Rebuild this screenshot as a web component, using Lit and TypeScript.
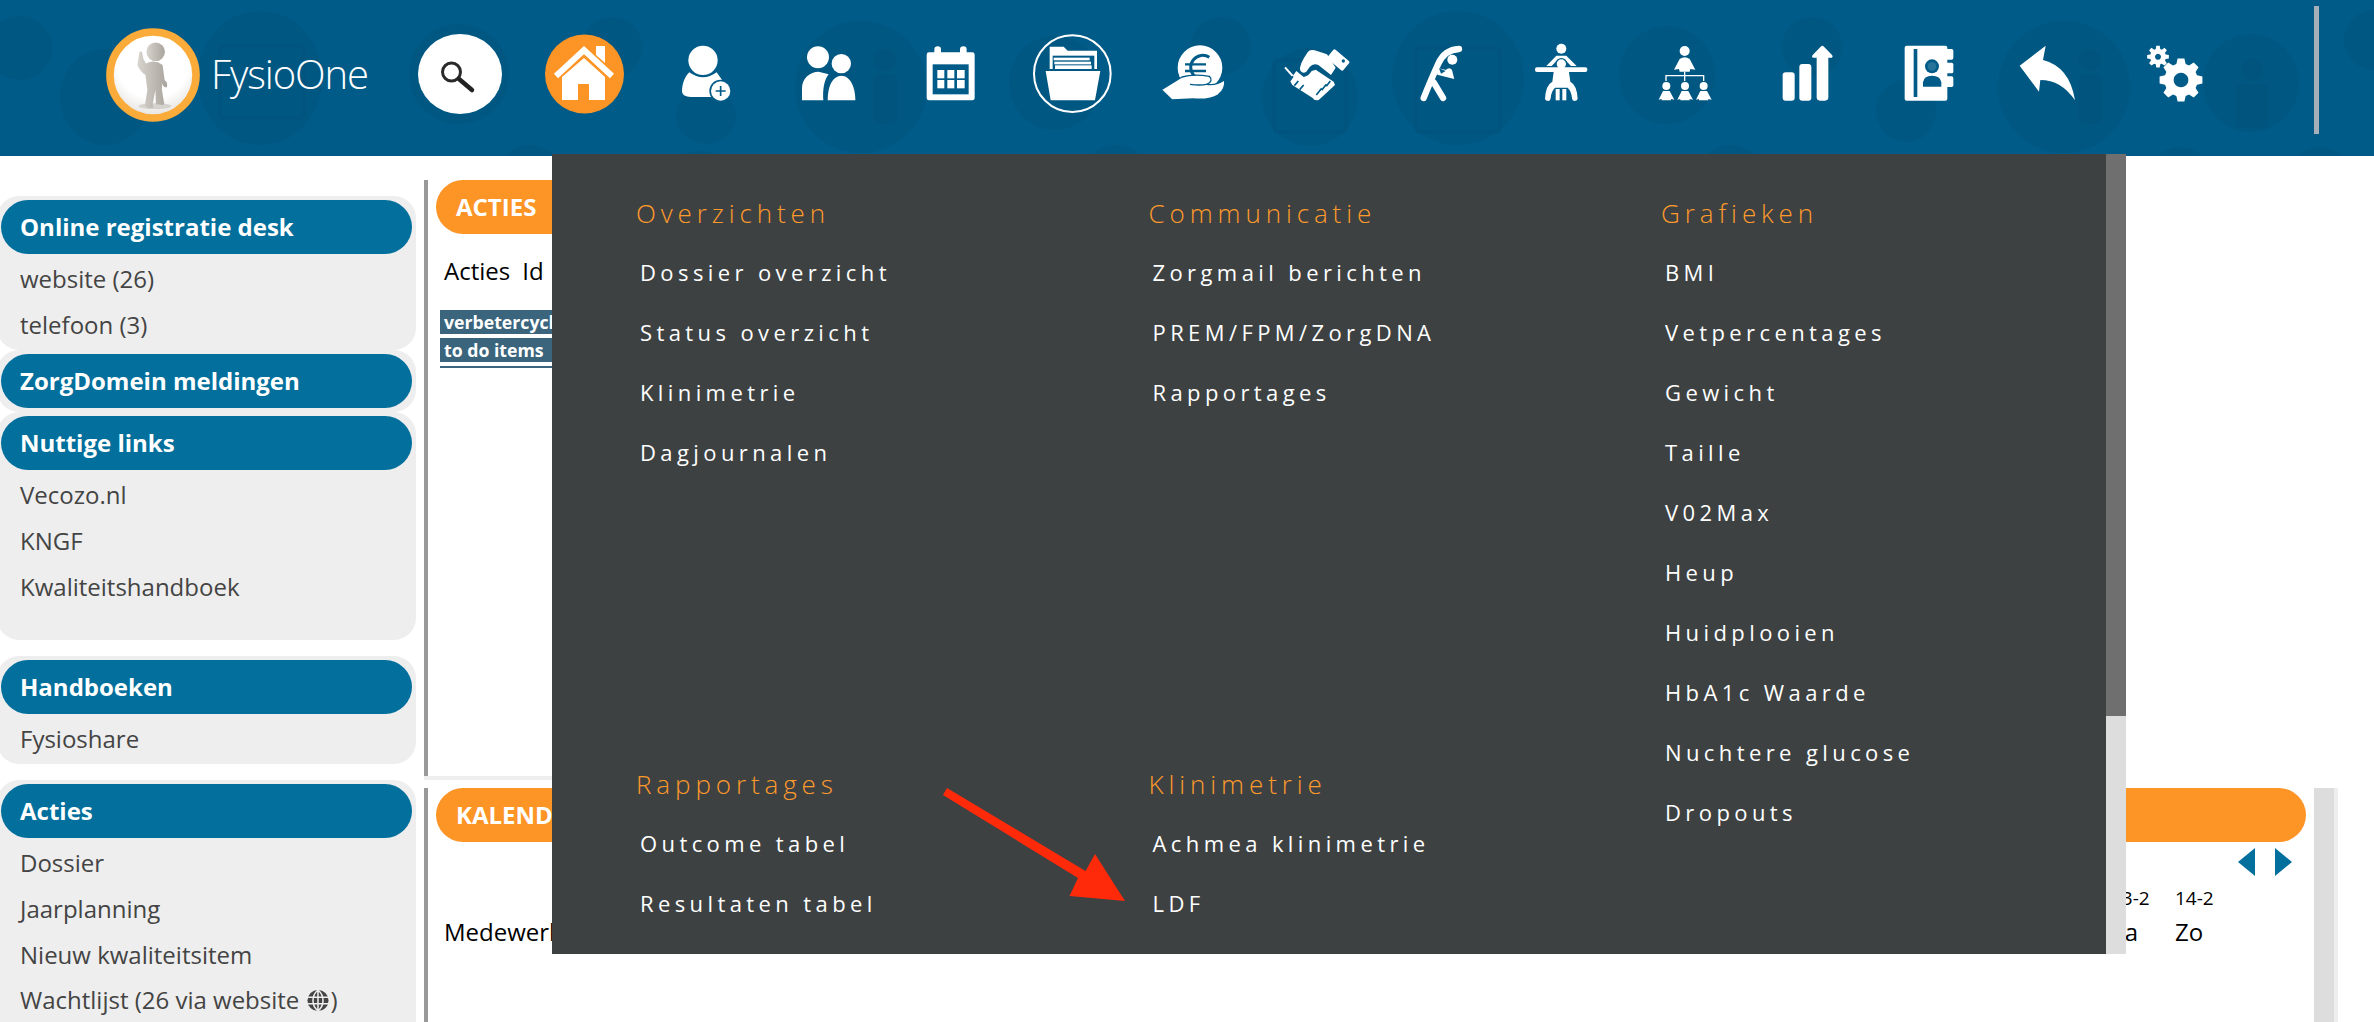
import { LitElement, html, svg, css } from "lit";
import { customElement } from "lit/decorators.js";

const BG = "#005b88";

function gear(cx: number, cy: number, rOut: number, rIn: number, teeth: number): string {
  const pts: string[] = [];
  const step = (Math.PI * 2) / teeth;
  for (let i = 0; i < teeth; i++) {
    const a = i * step - Math.PI / 2;
    const seq: [number, number][] = [
      [rIn, a - step * 0.36],
      [rOut, a - step * 0.2],
      [rOut, a + step * 0.2],
      [rIn, a + step * 0.36],
    ];
    for (const [r, t] of seq) pts.push(`${(cx + r * Math.cos(t)).toFixed(1)} ${(cy + r * Math.sin(t)).toFixed(1)}`);
  }
  return "M" + pts.join("L") + "Z";
}

interface NavIcon { x: number; w: number; icon: unknown; }

const navIcons: NavIcon[] = [
  { x: 418, w: 84, icon: html`<svg viewBox="418 25 84 100" width="84" height="100">
    <ellipse cx="460" cy="74" rx="42" ry="40" fill="#fff"/>
    <circle cx="451.5" cy="72" r="9" fill="none" stroke="#2a2a2a" stroke-width="3"/>
    <path d="M459 79 L472 90" stroke="#222" stroke-width="4.5" stroke-linecap="round"/>
  </svg>` },
  { x: 545, w: 79, icon: html`<svg viewBox="545 25 79 100" width="79" height="100">
    <circle cx="584.5" cy="74" r="39.5" fill="#fd9426"/>
    <path d="M596 46h9v17l-9-8z" fill="#fff"/>
    <path d="M556 76 L584 50 L612 76" fill="none" stroke="#fff" stroke-width="6"/>
    <path d="M562 77 L584 58 L605 77 V100 H589 V84 H578 V100 H562Z" fill="#fff"/>
  </svg>` },
  { x: 680, w: 53.33, icon: html`<svg viewBox="30 0 160 300" width="53.33" height="100">
    <circle cx="99" cy="106" r="44" fill="#fff"/>
    <path d="M58 142 Q99 172 140 142 L160 170 L160 216 L62 216 Q38 214 36 200 C36 178 44 154 58 142Z" fill="#fff"/>
    <circle cx="152" cy="198" r="34" fill="${BG}"/>
    <circle cx="152" cy="198" r="29" fill="#fff"/>
    <path d="M152 183V213M137 198H167" stroke="${BG}" stroke-width="5"/>
  </svg>` },
  { x: 800, w: 57.33, icon: html`<svg viewBox="390 0 172 300" width="57.33" height="100" fill="#fff">
    <circle cx="444" cy="97" r="33"/>
    <path d="M396 226 V190 C396 160 420 140 446 140 L476 148 C462 165 458 195 460 226Z"/>
    <circle cx="514" cy="116" r="29"/>
    <path d="M473 226 C473 180 490 152 514 152 C540 152 556 185 556 226Z"/>
  </svg>` },
  { x: 925, w: 51.67, icon: html`<svg viewBox="765 0 155 300" width="51.67" height="100">
    <rect x="770" y="82" width="144" height="144" rx="7" fill="#fff"/>
    <rect x="793" y="64" width="20" height="30" rx="10" fill="#fff"/>
    <rect x="870" y="64" width="20" height="30" rx="10" fill="#fff"/>
    <rect x="788" y="118" width="108" height="90" fill="${BG}"/>
    <g fill="#fff">
      <rect x="802" y="135" width="21" height="25"/><rect x="832" y="135" width="21" height="25"/><rect x="861" y="135" width="23" height="25"/>
      <rect x="802" y="165" width="21" height="25"/><rect x="832" y="165" width="21" height="25"/><rect x="861" y="165" width="23" height="25"/>
    </g>
  </svg>` },
  { x: 1031.67, w: 81.67, icon: html`<svg viewBox="1085 0 245 300" width="81.67" height="100">
    <circle cx="1206" cy="146" r="115" fill="none" stroke="#fff" stroke-width="6"/>
    <path d="M1138 132 V65 H1180 L1192 77 H1280 V132Z" fill="#fff"/>
    <rect x="1147" y="92" width="125" height="44" fill="${BG}"/>
    <g fill="#fff">
      <rect x="1150" y="98" width="108" height="8"/>
      <rect x="1152" y="110" width="110" height="8"/>
      <rect x="1154" y="121" width="110" height="11"/>
    </g>
    <path d="M1126 138 H1290 L1274 226 H1141Z" fill="#fff"/>
  </svg>` },
  { x: 1160, w: 66.67, icon: html`<svg viewBox="30 0 200 300" width="66.67" height="100">
    <circle cx="150" cy="128" r="67" fill="#fff"/>
    <path d="M178 97 A36 36 0 1 0 178 157" fill="none" stroke="${BG}" stroke-width="9"/>
    <path d="M105 118H168M105 138H168" stroke="${BG}" stroke-width="7"/>
    <path d="M34 194 L96 156 Q130 146 178 154 Q192 168 170 178 Q200 182 224 164 Q228 192 204 210 Q180 226 130 222 L66 225Z" fill="#fff" stroke="${BG}" stroke-width="4"/>
    <path d="M120 178 Q150 182 170 178" fill="none" stroke="${BG}" stroke-width="4"/>
  </svg>` },
  { x: 1283.33, w: 68.33, icon: html`<svg viewBox="400 0 205 300" width="68.33" height="100">
    <rect x="-31" y="-18" width="62" height="36" rx="5" transform="translate(566 105) rotate(40)" fill="#fff"/>
    <circle cx="581" cy="108" r="5" fill="${BG}"/>
    <path d="M452 137 Q446 122 474 82 Q480 72 495 76 L532 88 L558 128 L544 150 L506 120 Q490 114 480 126 L470 140 Q460 148 452 137Z" fill="#fff"/>
    <path d="M498 134 L552 170 L556 180 L508 224 Q496 230 488 218 L428 180 L420 166 L440 138 L462 156 Q476 154 486 138Z" fill="#fff"/>
    <path d="M406 127 L440 165" stroke="#fff" stroke-width="6"/>
    <path d="M500 210 L516 190M516 196 L530 178M530 184 L542 168M430 154 L420 168M446 168 L434 182M462 180 L450 194" stroke="${BG}" stroke-width="5"/>
  </svg>` },
  { x: 1418.33, w: 46.67, icon: html`<svg viewBox="805 0 140 300" width="46.67" height="100">
    <circle cx="908" cy="104" r="15" fill="#fff"/>
    <g fill="none" stroke="#fff" stroke-linecap="round">
      <path d="M928 72 Q885 74 866 116 Q846 160 822 219" stroke-width="19"/>
      <path d="M852 172 L880 219" stroke-width="19"/>
      <path d="M868 140 L900 148 L898 140" stroke-width="20"/>
    </g>
    <path d="M868 130 L888 138 L874 146Z" fill="${BG}"/>
  </svg>` },
  { x: 1533.33, w: 56.67, icon: html`<svg viewBox="1150 0 170 300" width="56.67" height="100" fill="#fff">
    <circle cx="1235" cy="71" r="15"/>
    <path d="M1190 123 L1220 92 H1250 L1281 123 H1264 L1246 104 H1224 L1206 123Z"/>
    <circle cx="1235" cy="117" r="18" fill="${BG}"/>
    <circle cx="1235" cy="117" r="14"/>
    <rect x="1156" y="127" width="157" height="14" rx="6"/>
    <path d="M1212 141 H1258 L1262 170 Q1282 180 1284 222 Q1282 228 1274 228 Q1268 228 1267 220 Q1266 200 1254 188 H1216 Q1204 200 1203 220 Q1202 228 1196 228 Q1188 228 1186 222 Q1188 180 1208 170Z"/>
    <rect x="1218" y="192" width="12" height="34"/>
    <rect x="1238" y="192" width="12" height="34"/>
  </svg>` },
  { x: 1656.67, w: 56.67, icon: html`<svg viewBox="20 0 170 300" width="56.67" height="100" fill="#fff">
    <circle cx="103" cy="78" r="15"/>
    <path d="M71 134 L88 102 Q103 92 118 102 L135 134 L120 132 L118 140 H88 L86 132Z"/>
    <path d="M47 168 V152 H160 V168 M103 140 V168" fill="none" stroke="#fff" stroke-width="4"/>
    <circle cx="48" cy="183" r="12"/><circle cx="104" cy="183" r="12"/><circle cx="160" cy="183" r="12"/>
    <path d="M25 224 L38 198 H58 L72 224 L62 222 V226 H34 V222Z"/>
    <path d="M81 224 L94 198 H114 L128 224 L118 222 V226 H90 V222Z"/>
    <path d="M137 224 L150 198 H170 L184 224 L174 222 V226 H146 V222Z"/>
  </svg>` },
  { x: 1780, w: 55, icon: html`<svg viewBox="390 0 165 300" width="55" height="100" fill="#fff">
    <rect x="398" y="142" width="36" height="85" rx="9"/>
    <rect x="448" y="117" width="36" height="110" rx="9"/>
    <path d="M500 98 H488 Q484 94 488 90 L512 65 Q517 60 522 65 L546 90 Q550 94 546 98 H535 V217 Q535 227 525 227 H510 Q500 227 500 217Z"/>
  </svg>` },
  { x: 1903.33, w: 51.67, icon: html`<svg viewBox="760 0 155 300" width="51.67" height="100">
    <rect x="765" y="62" width="128" height="165" rx="6" fill="#fff"/>
    <g fill="#fff">
      <rect x="885" y="72" width="26" height="32" rx="5"/>
      <rect x="885" y="113" width="26" height="32" rx="5"/>
      <rect x="885" y="154" width="26" height="32" rx="5"/>
    </g>
    <rect x="792" y="72" width="11" height="144" fill="${BG}"/>
    <circle cx="847" cy="124" r="21" fill="${BG}"/>
    <circle cx="847" cy="124" r="13" fill="#fff" opacity=".15"/>
    <path d="M820 185 V172 Q822 152 847 152 Q873 152 875 172 V185Z" fill="${BG}"/>
  </svg>` },
  { x: 2018.33, w: 58.33, icon: html`<svg viewBox="1105 0 175 300" width="58.33" height="100">
    <path d="M1110 122 L1188 62 L1180 105 Q1260 125 1276 226 Q1235 165 1172 165 L1168 200Z" fill="#fff"/>
  </svg>` },
  { x: 2146.67, w: 58.33, icon: html`<svg viewBox="50 0 175 300" width="58.33" height="100">
    <path fill-rule="evenodd" fill="#fff" d="${gear(86, 95, 33, 24, 8)} M86 86 a9 9 0 1 0 .01 0Z"/>
    <path fill-rule="evenodd" fill="#fff" d="${gear(155, 165, 65, 50, 8)} M155 143 a22 22 0 1 0 .01 0Z"/>
  </svg>` },
];

const NAV_START = 380;

const watermarks: [number, number, number, number][] = [
  [20, 48, 32, 32], [105, 97, 45, 48], [260, 78, 62, 67], [459, 74, 50, 50], [612, 47, 30, 30], [706, 116, 30, 28],
  [530, 175, 32, 30], [861, 87, 66, 66], [1055, 83, 46, 47], [1221, 46, 30, 29], [1310, 97, 48, 49], [1458, 78, 66, 67],
  [1116, 175, 32, 30], [1667, 75, 48, 49], [1812, 47, 30, 30], [1906, 111, 30, 31], [2064, 87, 66, 66], [2251, 83, 48, 49],
  [1731, 175, 32, 30], [2180, 175, 30, 28], [2320, 175, 30, 28], [2374, 40, 30, 30], [700, 175, 30, 24],
];

interface Section { title: string; items: string[]; cls: string; }

const menu: Section[] = [
  { title: "Overzichten", items: ["Dossier overzicht", "Status overzicht", "Klinimetrie", "Dagjournalen"], cls: "" },
  { title: "Communicatie", items: ["Zorgmail berichten", "PREM/FPM/ZorgDNA", "Rapportages"], cls: "" },
  { title: "Grafieken", items: ["BMI", "Vetpercentages", "Gewicht", "Taille", "V02Max", "Heup", "Huidplooien", "HbA1c Waarde", "Nuchtere glucose", "Dropouts"], cls: "tall" },
  { title: "Rapportages", items: ["Outcome tabel", "Resultaten tabel", "Indicatoren"], cls: "" },
  { title: "Klinimetrie", items: ["Achmea klinimetrie", "LDF"], cls: "" },
];

@customElement("app-root")
export class AppRoot extends LitElement {
  static styles = css`
    :host { display: block; position: relative; width: 2374px; height: 1022px; overflow: hidden; background: #fff; font-family: "Open Sans", "Noto Sans", sans-serif; }
    .header { position: relative; height: 156px; background: #005b88; display: flex; align-items: flex-start; overflow: hidden; }
    .wm { position: absolute; inset: 0; width: 100%; height: 100%; }
    .brand { position: relative; display: flex; align-items: flex-start; width: 274px; margin-left: 106px; margin-top: 28px; flex: none; }
    .brand-name { color: #fff; font-family: "Open Sans", sans-serif; font-weight: 300; font-size: 40px; line-height: 54px; letter-spacing: -1.1px; margin-left: 11px; margin-top: 19px; }
    .nav { position: relative; display: flex; margin-top: 25px; flex: none; }
    .nav svg { display: block; flex: none; }
    .divider { position: relative; width: 5px; height: 128px; margin-top: 6px; margin-left: 109px; background: #a4afb7; flex: none; }
    .body { display: flex; align-items: flex-start; }
    .sidebar { width: 419px; margin-left: -3px; padding-top: 40px; display: flex; flex-direction: column; flex: none; }
    .card { background: #eee; border-radius: 22px; padding: 4px; box-sizing: border-box; }
    .card.g16 { margin-bottom: 16px; }
    .card.h228 { height: 228px; }
    .card.h108 { height: 108px; }
    .card.first { height: 154px; }
    .card.last { min-height: 300px; }
    .pill { height: 54px; border-radius: 27px; background: #026f9c; color: #fff; font-weight: 700; font-size: 24px; line-height: 54px; padding-left: 19px; }
    .list { padding: 2px 0 0; }
    .row { height: 45.8px; line-height: 45.8px; color: #444; font-size: 24px; padding-left: 19px; display: flex; align-items: center; white-space: pre; }
    .row svg { margin: 0 1px 0 0; }
    .main { margin-left: 8px; padding-top: 24px; width: 1914px; flex: none; }
    .panel1 { width: 1640px; height: 596px; border-left: 4px solid #999; }
    .sep { width: 1640px; height: 4px; background: #eee; margin-bottom: 8px; }
    .orange { height: 54px; border-radius: 27px; background: #fd9426; color: #fff; font-weight: 700; font-size: 24px; line-height: 54px; padding-left: 20px; margin-left: 8px; }
    .plain { color: #000; font-size: 24px; line-height: 30px; }
    .acties-head { display: flex; gap: 12px; margin: 22px 0 0 16px; }
    .tbl { margin: 24px 0 0 12px; }
    .tbl div { height: 24px; margin-bottom: 4px; background: #3a657d; color: #fff; font-weight: 700; font-size: 17.7px; line-height: 24px; padding-left: 4px; }
    .tbl .rule { height: 2px; }
    .panel2 { position: relative; display: flex; width: 1914px; height: 234px; }
    .cal { width: 1886px; flex: none; border-left: 4px solid #999; box-sizing: border-box; }
    .cal .orange { margin-right: 4px; }
    .scroll-a { width: 20px; background: #ddd; flex: none; margin-left: 4px; }
    .scroll-b { width: 4px; background: #eee; flex: none; }
    .arrows { display: flex; justify-content: flex-end; gap: 20px; margin: 6px 18px 0 0; height: 28px; }
    .arrows svg { display: block; }
    .cal-body { display: flex; align-items: flex-end; padding-left: 16px; margin-top: 7px; }
    .grow { flex: 1; }
    .cal-col { width: 64px; flex: none; }
    .cal-date { font-size: 19px; line-height: 30px; color: #000; margin-bottom: 4px; }
    .spacer { width: 71px; flex: none; }
    .menu { position: absolute; left: 552px; top: 154px; width: 1574px; height: 800px; display: flex; z-index: 5; }
    .menu-in { width: 1554px; height: 800px; background: #3d4142; overflow: hidden; padding: 42px 0 0 84px; box-sizing: border-box; display: grid; grid-template-columns: repeat(3, 512.5px); grid-template-rows: 571px auto; }
    .sec.tall { grid-row: 1 / span 2; grid-column: 3; }
    .sec-t { color: #ff9a2b; font-weight: 300; font-size: 26px; letter-spacing: 4.9px; line-height: 34px; margin-bottom: 11.5px; }
    .sec-i { color: #fff; font-weight: 400; font-size: 22px; letter-spacing: 4.4px; line-height: 60px; height: 60px; padding-left: 4px; white-space: nowrap; }
    .track { width: 20px; height: 800px; background: #ddd; flex: none; }
    .thumb { height: 562px; background: #6f6f6f; }
    .arrow { position: absolute; left: 0; top: 0; width: 2374px; height: 1022px; z-index: 6; pointer-events: none; }
  `;

  render() {
    let prev = NAV_START;
    const nav = navIcons.map((n) => {
      const m = n.x - prev;
      prev = n.x + n.w;
      return html`<div style="margin-left:${m}px">${n.icon}</div>`;
    });
    return html`
      <div class="header">
        <svg class="wm" viewBox="0 0 2374 156">
          <g fill="#005782">
            ${watermarks.map((w) => svg`<ellipse cx="${w[0]}" cy="${w[1]}" rx="${w[2]}" ry="${w[3]}"></ellipse>`)}
          </g>
          <g fill="none" stroke="#00547e" stroke-width="3">
            <rect x="220" y="46" width="84" height="72" rx="4"></rect>
            <rect x="1416" y="48" width="84" height="84" rx="4"></rect>
            <rect x="1274" y="60" width="72" height="72" rx="4"></rect>
          </g>
          <g fill="#00547e">
            <circle cx="2090" cy="60" r="11"></circle><rect x="2078" y="74" width="24" height="50" rx="8"></rect>
            <circle cx="885" cy="60" r="11"></circle><rect x="873" y="74" width="24" height="50" rx="8"></rect>
            <circle cx="2252" cy="70" r="11"></circle><rect x="2236" y="84" width="32" height="44" rx="6"></rect>
          </g>
        </svg>
        <div class="brand">
          <svg viewBox="48 38 282 284" width="94" height="94">
            <defs>
              <radialGradient id="lg" cx="50%" cy="35%" r="70%"><stop offset="60%" stop-color="#fff"></stop><stop offset="100%" stop-color="#dcdad6"></stop></radialGradient>
              <linearGradient id="fg" x1="0" x2="1"><stop offset="0" stop-color="#d8d4ce"></stop><stop offset="1" stop-color="#a9a49c"></stop></linearGradient>
            </defs>
            <circle cx="189" cy="180" r="130" fill="url(#lg)" stroke="#fbab39" stroke-width="23"></circle>
            <ellipse cx="195" cy="274" rx="50" ry="9" fill="#c9c6c1" opacity=".7"></ellipse>
            <g fill="url(#fg)">
              <circle cx="197" cy="110" r="28"></circle>
              <path d="M168 145 Q195 132 218 150 L224 195 Q236 205 230 218 Q220 218 216 205 L216 225 L222 262 Q226 272 214 270 L198 268 L196 225 L188 268 L190 278 Q172 284 164 274 L172 225 L166 180 Q150 170 142 150 L148 110 L156 110 L160 132Z"></path>
            </g>
          </svg>
          <div class="brand-name">FysioOne</div>
        </div>
        <div class="nav">${nav}</div>
        <div class="divider"></div>
      </div>

      <div class="body">
        <div class="sidebar">
          <div class="card first">
            <div class="pill">Online registratie desk</div>
            <div class="list"><div class="row">website (26)</div><div class="row">telefoon (3)</div></div>
          </div>
          <div class="card"><div class="pill">ZorgDomein meldingen</div></div>
          <div class="card g16 h228">
            <div class="pill">Nuttige links</div>
            <div class="list"><div class="row">Vecozo.nl</div><div class="row">KNGF</div><div class="row">Kwaliteitshandboek</div></div>
          </div>
          <div class="card g16 h108">
            <div class="pill">Handboeken</div>
            <div class="list"><div class="row">Fysioshare</div></div>
          </div>
          <div class="card last">
            <div class="pill">Acties</div>
            <div class="list">
              <div class="row">Dossier</div><div class="row">Jaarplanning</div><div class="row">Nieuw kwaliteitsitem</div>
              <div class="row">Wachtlijst (26 via website <svg viewBox="0 0 24 24" width="24" height="23"><circle cx="12" cy="12" r="11" fill="#444"></circle><path d="M1 8.500H23M1 15.500H23M12 1V23M12 1C5 7 5 17 12 23M12 1C19 7 19 17 12 23" fill="none" stroke="#eee" stroke-width="1.600"></path></svg>)</div>
            </div>
          </div>
        </div>

        <div class="main">
          <div class="panel1">
            <div class="orange">ACTIES</div>
            <div class="plain acties-head"><span>Acties</span><span>Id</span></div>
            <div class="tbl"><div>verbetercyclus</div><div>to do items</div><div class="rule"></div></div>
          </div>
          <div class="sep"></div>
          <div class="panel2">
            <div class="cal">
              <div class="orange">KALENDER</div>
              <div class="arrows">
                <svg viewBox="0 0 17 28" width="17" height="28"><path d="M17 0V28L0 14Z" fill="#026f9c"></path></svg>
                <svg viewBox="0 0 17 28" width="17" height="28"><path d="M0 0V28L17 14Z" fill="#026f9c"></path></svg>
              </div>
              <div class="cal-body">
                <div class="plain">Medewerker</div>
                <div class="grow"></div>
                <div class="cal-col"><div class="cal-date">13-2</div><div class="plain">Za</div></div>
                <div class="cal-col"><div class="cal-date">14-2</div><div class="plain">Zo</div></div>
                <div class="spacer"></div>
              </div>
            </div>
            <div class="scroll-a"></div>
            <div class="scroll-b"></div>
          </div>
        </div>
      </div>

      <div class="menu">
        <div class="menu-in">
          ${menu.map((s) => html`<div class="sec ${s.cls}"><div class="sec-t">${s.title}</div>${s.items.map((i) => html`<div class="sec-i">${i}</div>`)}</div>`)}
        </div>
        <div class="track"><div class="thumb"></div></div>
      </div>

      <svg class="arrow" viewBox="0 0 2374 1022">
        <polygon points="947,788 1085.500,871 1095,854 1125,901 1069.500,896 1078,878 943,795" fill="#ff2a0a"></polygon>
      </svg>
    `;
  }
}
